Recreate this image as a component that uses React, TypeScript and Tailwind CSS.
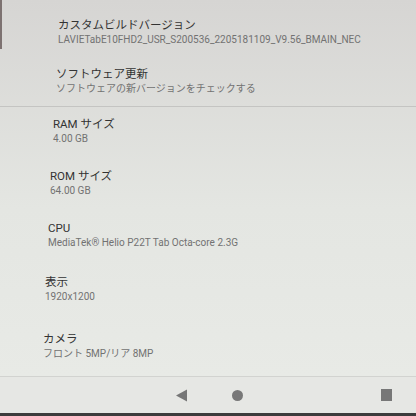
const rows = [
  { title: "RAM サイズ", value: "4.00 GB", pad: "pl-[53px]", h: "h-[52px]" },
  { title: "ROM サイズ", value: "64.00 GB", pad: "pl-[50px]", h: "h-[52px]" },
  { title: "CPU", value: "MediaTek® Helio P22T Tab Octa-core 2.3G", pad: "pl-[48px]", h: "h-[54px]" },
  { title: "表示", value: "1920x1200", pad: "pl-[45px]", h: "h-[57px]" },
  { title: "カメラ", value: "フロント 5MP/リア 8MP", pad: "pl-[43px]", h: "h-[54px]" },
];

function Row({ title, value, pad, h, top = "pt-[9px]" }: { title: string; value: string; pad: string; h: string; top?: string }) {
  return (
    <div className={`${h} ${top} ${pad} flex flex-col`}>
      <div className="text-[11.5px] leading-[16px] text-[#333333]">{title}</div>
      <div className="text-[10px] leading-[14px] text-[#727272]">{value}</div>
    </div>
  );
}

export default function App() {
  return (
    <div
      className="flex h-[416px] w-[416px] flex-col overflow-hidden bg-gradient-to-b from-[#d6d5d3] via-[#e4e6e2] to-[#e9ebe7]"
      style={{ fontFamily: "Roboto, 'Noto Sans CJK JP', sans-serif" }}
    >
      <div className="border-l-2 border-l-[#7d7271]">
        <Row title="カスタムビルドバージョン" value="LAVIETabE10FHD2_USR_S200536_2205181109_V9.56_BMAIN_NEC" pad="pl-[56px]" h="h-[49px]" top="pt-[17px]" />
      </div>
      <Row title="ソフトウェア更新" value="ソフトウェアの新バージョンをチェックする" pad="pl-[56px]" h="h-[57px]" top="pt-[17px]" />
      <div className="h-px bg-[#c4c4c2]" />
      {rows.map((r) => (
        <Row key={r.title} {...r} />
      ))}
      <div className="h-px bg-[#d2d3d0]" />
      <div className="flex h-[36px] items-center bg-[#e6e7e4]">
        <div className="flex w-[189px] justify-end pr-[1px]">
          <svg width="12" height="13" viewBox="0 0 12 13">
            <path d="M0 6.5 L11 0.5 L11 12.5 Z" fill="#767676" />
          </svg>
        </div>
        <div className="flex flex-1 justify-center pl-[4px]">
          <div className="h-[11px] w-[11px] rounded-full bg-[#787878]" />
        </div>
        <div className="flex w-[134px] justify-start pl-[99px]">
          <div className="h-[12px] w-[11px] bg-[#777777]" />
        </div>
      </div>
      <div className="h-[3px] flex-1 bg-[#3c3c3c]" />
    </div>
  );
}
